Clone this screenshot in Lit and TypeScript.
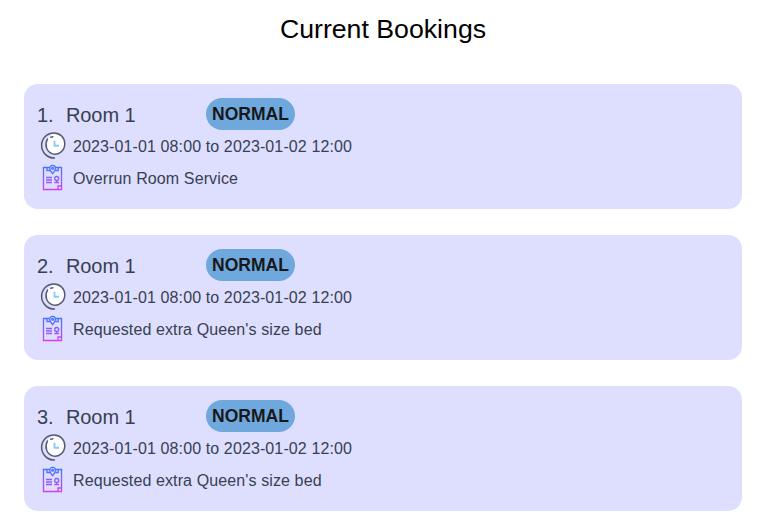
import { LitElement, html, css } from "lit";
import { customElement, property } from "lit/decorators.js";

@customElement("booking-card")
class BookingCard extends LitElement {
  @property({ type: Number }) index = 1;
  @property() room = "";
  @property() status = "";
  @property() period = "";
  @property() note = "";

  static styles = css`
    :host {
      display: block;
      box-sizing: border-box;
      height: 125px;
      padding: 14px 13px 0;
      border-radius: 14px;
      background: #dedeff;
      color: #374151;
      font-size: 16px;
      line-height: 33px;
    }
    .head {
      display: flex;
      height: 32px;
    }
    .room {
      width: 169px;
      font-size: 20px;
      line-height: 34px;
      letter-spacing: -0.1px;
      white-space: pre;
    }
    .number {
      display: inline-block;
      width: 29px;
    }
    .badge {
      width: 89px;
      border-radius: 16px;
      background: #6fa8dc;
      color: #18181b;
      font-size: 17.5px;
      font-weight: 700;
      line-height: 32px;
      text-align: center;
    }
    .row {
      display: flex;
      height: 32px;
      white-space: nowrap;
      letter-spacing: 0.115px;
    }
    svg {
      width: 32px;
      height: 32px;
      margin-right: 4px;
      flex: none;
    }
  `;

  render() {
    return html`
      <div class="head">
        <div class="room"><span class="number">${this.index}.</span>${this.room}</div>
        <div class="badge">${this.status}</div>
      </div>
      <div class="row">
        <svg viewBox="0 0 32 32" fill="none" stroke="#555b6e" stroke-width="1.5" stroke-linecap="round">
          <ellipse cx="18" cy="14" rx="9.200" ry="10" fill="#fff" stroke="none" />
          <path d="M10.500 9C7.300 14.600 9.500 21.600 15 23.600C21.500 25.900 27.800 20.800 27.800 13.800C27.800 7.500 23 2.900 16.800 2.900C9.500 2.900 4.600 8.900 4.600 15.300C4.600 22.500 10.300 28 17.400 28" />
          <path d="M13.800 7.200l2-.5" />
          <path d="M17.500 10.800v5h4.500" stroke="#8cc9fa" stroke-width="1.900" stroke-linecap="butt" />
        </svg>
        <span>${this.period}</span>
      </div>
      <div class="row">
        <svg viewBox="0 0 32 32" fill="none" stroke="url(#ink)" stroke-width="1.3">
          <defs>
            <linearGradient id="ink" gradientUnits="userSpaceOnUse" x1="0" y1="3" x2="0" y2="28">
              <stop offset="0" stop-color="#3478ff" />
              <stop offset=".5" stop-color="#8063fa" />
              <stop offset="1" stop-color="#d43df5" />
            </linearGradient>
          </defs>
          <path d="M12.400 5.500H6.500v22h18v-22h-5.800" />
          <path d="M15.600 11.700C14 9.700 12.700 8.200 12.700 6.300a2.900 2.900 0 0 1 5.800 0c0 1.900-1.300 3.400-2.900 5.400z" />
          <circle cx="15.600" cy="6.300" r=".9" />
          <path d="M10 5.500v3h3M21.200 5.500v3h-3" />
          <path d="M9 15.500h6M9 18h6M9 20.500h6M17.300 20.500h4.800" />
          <circle cx="19.700" cy="16.500" r="2" />
          <path d="M19.700 18.500v2M24.500 24h-3.500v3.500" />
        </svg>
        <span>${this.note}</span>
      </div>
    `;
  }
}

@customElement("app-root")
class AppRoot extends LitElement {
  static styles = css`
    :host {
      display: block;
      box-sizing: border-box;
      height: 522px;
      overflow: hidden;
      padding: 0 18px 0 24px;
      background: #fff;
      font-family: "Liberation Sans", Arial, sans-serif;
    }
    h1 {
      margin: 0;
      height: 84px;
      color: #000;
      font-size: 26.700px;
      font-weight: 400;
      line-height: 59px;
      text-align: center;
    }
    .list {
      display: grid;
      gap: 26px;
    }
  `;

  private bookings = [
    { note: "Overrun Room Service" },
    { note: "Requested extra Queen's size bed" },
    { note: "Requested extra Queen's size bed" },
  ];

  render() {
    return html`
      <h1>Current Bookings</h1>
      <div class="list">
        ${this.bookings.map(
          (b, i) => html`<booking-card
            .index=${i + 1}
            room="Room 1"
            status="NORMAL"
            period="2023-01-01 08:00 to 2023-01-02 12:00"
            .note=${b.note}
          ></booking-card>`
        )}
      </div>
    `;
  }
}
